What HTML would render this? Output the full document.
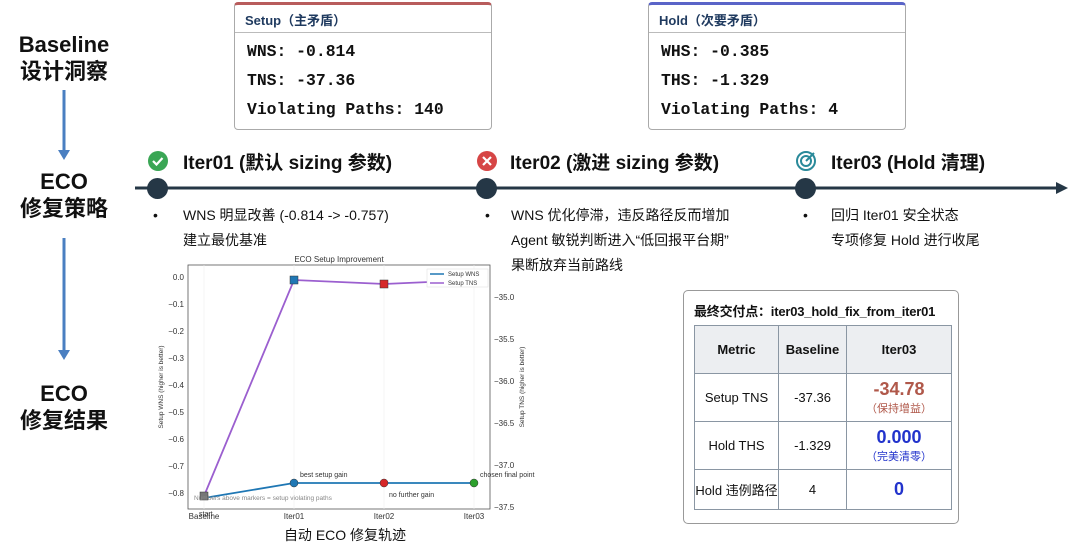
<!DOCTYPE html>
<html><head><meta charset="utf-8"><style>
*{margin:0;padding:0;box-sizing:border-box}
body{width:1080px;height:552px;background:#fff;position:relative;overflow:hidden;font-family:"Liberation Sans","Noto Sans CJK SC",sans-serif;color:#111}
.a{position:absolute}
.lab{position:absolute;left:0;width:128px;text-align:center;font-weight:bold;font-size:22px;line-height:27px}
.box{position:absolute;top:2px;width:258px;height:128px;border:1px solid #aaa;border-radius:4px;background:#fff}
.box .h{height:28px;border-bottom:1px solid #bbb;font-size:13px;font-weight:bold;color:#1f3a5f;padding:5px 10px}
.box .m{font-family:"Liberation Mono","Noto Sans CJK SC",monospace;font-weight:bold;font-size:16.4px;line-height:29px;padding:4px 12px}
.t{position:absolute;top:148px;font-weight:bold;font-size:19px}
.b{position:absolute;font-size:14px;line-height:25px}
.dot{position:absolute;top:178px;width:21px;height:21px;border-radius:50%;background:#253746}
table{border-collapse:collapse;position:absolute;left:10px;top:34px;width:258px;font-size:13px;text-align:center}
td,th{border:1px solid #8a96a3}
th{background:#eceef1;height:48px}
</style></head><body>
<div class="lab" style="top:31px">Baseline<br>设计洞察</div>
<div class="lab" style="top:168px">ECO<br>修复策略</div>
<div class="lab" style="top:380px">ECO<br>修复结果</div>
<svg class="a" style="left:0;top:0" width="140" height="552">
<g stroke="#4a7fc1" stroke-width="3" fill="#4a7fc1"><line x1="64" y1="90" x2="64" y2="150"/><path d="M58 150 L70 150 L64 160Z" stroke="none"/>
<line x1="64" y1="238" x2="64" y2="350"/><path d="M58 350 L70 350 L64 360Z" stroke="none"/></g></svg>

<div class="box" style="left:234px;border-top:3px solid #b85c5c"><div class="h">Setup（主矛盾）</div><div class="m">WNS: -0.814<br>TNS: -37.36<br>Violating Paths: 140</div></div>
<div class="box" style="left:648px;border-top:3px solid #5a64c8"><div class="h">Hold（次要矛盾）</div><div class="m">WHS: -0.385<br>THS: -1.329<br>Violating Paths: 4</div></div>

<svg class="a" style="left:0;top:0" width="1080" height="552">
<line x1="135" y1="188" x2="1060" y2="188" stroke="#253746" stroke-width="3"/>
<path d="M1056 182 L1068 188 L1056 194Z" fill="#253746"/>
<circle cx="158" cy="161" r="10" fill="#3aa655"/><path d="M153 161 l3.5 3.5 l6 -6.5" stroke="#fff" stroke-width="2.2" fill="none"/>
<circle cx="487" cy="161" r="10" fill="#d64545"/><path d="M483 157 l8 8 M491 157 l-8 8" stroke="#fff" stroke-width="2.2"/>
<g fill="none" stroke="#2a8a9a" stroke-width="2"><circle cx="806" cy="161" r="9"/><circle cx="806" cy="161" r="5"/></g><path d="M806 161 l8 -8" stroke="#2a8a9a" stroke-width="2"/>
</svg>
<div class="dot" style="left:147px"></div><div class="dot" style="left:476px"></div><div class="dot" style="left:795px"></div>
<div class="t" style="left:183px">Iter01 (默认 sizing 参数)</div>
<div class="t" style="left:510px">Iter02 (激进 sizing 参数)</div>
<div class="t" style="left:831px">Iter03 (Hold 清理)</div>
<div class="b" style="left:153px;top:203px">•</div><div class="b" style="left:183px;top:203px">WNS 明显改善 (-0.814 -&gt; -0.757)<br>建立最优基准</div>
<div class="b" style="left:485px;top:203px">•</div><div class="b" style="left:511px;top:203px">WNS 优化停滞，违反路径反而增加<br>Agent 敏锐判断进入“低回报平台期”<br>果断放弃当前路线</div>
<div class="b" style="left:803px;top:203px">•</div><div class="b" style="left:831px;top:203px">回归 Iter01 安全状态<br>专项修复 Hold 进行收尾</div>

<svg class="a" style="left:0;top:0" width="680" height="552" font-family="Liberation Sans" font-size="8" fill="#333">
<text x="339" y="262" text-anchor="middle" font-size="8">ECO Setup Improvement</text>
<rect x="188" y="265" width="302" height="244" fill="none" stroke="#555" stroke-width="0.8"/>
<g stroke="#eee" stroke-width="0.6"><line x1="204" y1="265" x2="204" y2="509"/><line x1="294" y1="265" x2="294" y2="509"/><line x1="384" y1="265" x2="384" y2="509"/><line x1="474" y1="265" x2="474" y2="509"/></g>
<g text-anchor="end">
<text x="184" y="280">0.0</text><text x="184" y="307">−0.1</text><text x="184" y="334">−0.2</text><text x="184" y="361">−0.3</text><text x="184" y="388">−0.4</text><text x="184" y="415">−0.5</text><text x="184" y="442">−0.6</text><text x="184" y="469">−0.7</text><text x="184" y="496">−0.8</text></g>
<g><text x="494" y="300">−35.0</text><text x="494" y="342">−35.5</text><text x="494" y="384">−36.0</text><text x="494" y="426">−36.5</text><text x="494" y="468">−37.0</text><text x="494" y="510">−37.5</text></g>
<text transform="translate(163 387) rotate(-90)" text-anchor="middle" font-size="6.5">Setup WNS (higher is better)</text>
<text transform="translate(524 387) rotate(-90)" text-anchor="middle" font-size="6.5">Setup TNS (higher is better)</text>
<g text-anchor="middle"><text x="204" y="519">Baseline</text><text x="294" y="519">Iter01</text><text x="384" y="519">Iter02</text><text x="474" y="519">Iter03</text></g>
<polyline points="204,496 294,280 384,284 474,280" fill="none" stroke="#9b5fcf" stroke-width="1.8"/>
<polyline points="204,498 294,483 384,483 474,483" fill="none" stroke="#1f77b4" stroke-width="1.8"/>
<rect x="290" y="276" width="8" height="8" fill="#1f77b4" stroke="#333" stroke-width=".5"/>
<rect x="380" y="280" width="8" height="8" fill="#d62728" stroke="#333" stroke-width=".5"/>
<rect x="470" y="276" width="8" height="8" fill="#2ca02c" stroke="#333" stroke-width=".5"/>
<rect x="200" y="492" width="8" height="8" fill="#777" stroke="#333" stroke-width=".5"/>
<circle cx="294" cy="483" r="4" fill="#1f77b4" stroke="#333" stroke-width=".5"/><circle cx="384" cy="483" r="4" fill="#d62728" stroke="#333" stroke-width=".5"/><circle cx="474" cy="483" r="4" fill="#2ca02c" stroke="#333" stroke-width=".5"/>
<rect x="427" y="269" width="61" height="18" fill="#fff" stroke="#ddd" stroke-width=".5"/>
<line x1="430" y1="274" x2="444" y2="274" stroke="#1f77b4" stroke-width="1.5"/><text x="448" y="276" font-size="6">Setup WNS</text>
<line x1="430" y1="283" x2="444" y2="283" stroke="#9b5fcf" stroke-width="1.5"/><text x="448" y="285" font-size="6">Setup TNS</text>
<text x="300" y="477" font-size="7">best setup gain</text><text x="480" y="477" font-size="7">chosen final point</text><text x="389" y="497" font-size="7">no further gain</text>
<text x="194" y="500" font-size="6.5" fill="#888">Numbers above markers = setup violating paths</text>
<text x="199" y="516" font-size="7">start</text>
<text x="345" y="540" font-size="14" fill="#111" text-anchor="middle" font-family="Liberation Sans,Noto Sans CJK SC">自动 ECO 修复轨迹</text>
</svg>

<div class="a" style="left:683px;top:290px;width:276px;height:234px;border:1px solid #999;border-radius:5px">
<div style="position:absolute;left:10px;top:10px;font-size:13px;font-weight:bold;white-space:nowrap;letter-spacing:-0.2px">最终交付点：iter03_hold_fix_from_iter01</div>
<table><tr><th style="width:84px">Metric</th><th style="width:68px">Baseline</th><th>Iter03</th></tr>
<tr style="height:48px"><td>Setup TNS</td><td>-37.36</td><td><b style="color:#b0584a;font-size:18px">-34.78</b><br><span style="color:#b0584a;font-size:11px">（保持增益）</span></td></tr>
<tr style="height:48px"><td>Hold THS</td><td>-1.329</td><td><b style="color:#2233cc;font-size:18px">0.000</b><br><span style="color:#2233cc;font-size:11px">（完美清零）</span></td></tr>
<tr style="height:40px"><td>Hold 违例路径</td><td>4</td><td><b style="color:#2233cc;font-size:18px">0</b></td></tr></table>
</div>
</body></html>
